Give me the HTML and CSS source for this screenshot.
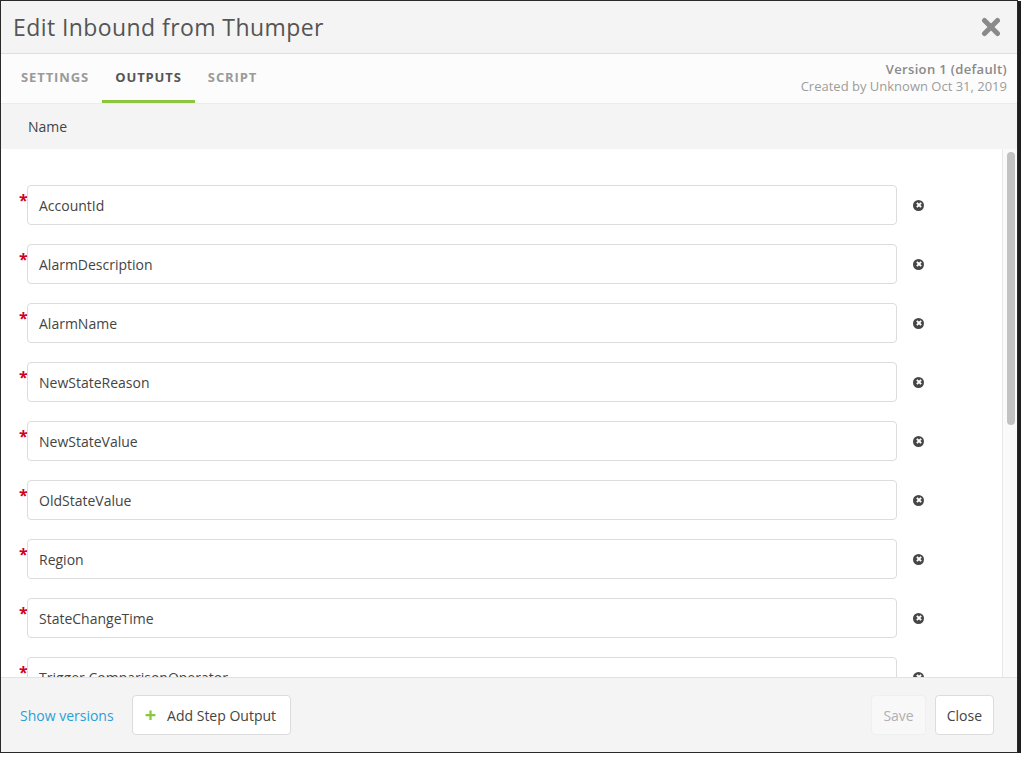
FILE: index.html
```html
<!DOCTYPE html>
<html>
<head>
<meta charset="utf-8">
<link rel="stylesheet" href="styles.css">
</head>
<body>
<div class="modal">
  <div class="modal-header">
    <h1 class="title">Edit Inbound from Thumper</h1>
    <span class="close-x" aria-label="close">
      <svg width="20" height="20" viewBox="0 0 20 20"><path d="M3.5 3.5 L16.5 16.5 M16.5 3.5 L3.5 16.5" stroke="#8a8a8a" stroke-width="5" stroke-linecap="round"/></svg>
    </span>
  </div>
  <div class="tabbar">
    <div class="tabs">
      <span class="tab">SETTINGS</span>
      <span class="tab active">OUTPUTS</span>
      <span class="tab">SCRIPT</span>
    </div>
    <div class="version">
      <div class="version-name">Version 1 (default)</div>
      <div class="version-meta">Created by Unknown Oct 31, 2019</div>
    </div>
  </div>
  <div class="col-header">Name</div>
  <div class="content">
    <div class="list">
      <div class="row"><span class="req">*</span><div class="field">AccountId</div><span class="remove"></span></div>
      <div class="row"><span class="req">*</span><div class="field">AlarmDescription</div><span class="remove"></span></div>
      <div class="row"><span class="req">*</span><div class="field">AlarmName</div><span class="remove"></span></div>
      <div class="row"><span class="req">*</span><div class="field">NewStateReason</div><span class="remove"></span></div>
      <div class="row"><span class="req">*</span><div class="field">NewStateValue</div><span class="remove"></span></div>
      <div class="row"><span class="req">*</span><div class="field">OldStateValue</div><span class="remove"></span></div>
      <div class="row"><span class="req">*</span><div class="field">Region</div><span class="remove"></span></div>
      <div class="row"><span class="req">*</span><div class="field">StateChangeTime</div><span class="remove"></span></div>
      <div class="row"><span class="req">*</span><div class="field">Trigger.ComparisonOperator</div><span class="remove"></span></div>
    </div>
    <div class="scrollbar"><div class="thumb"></div></div>
  </div>
  <div class="footer">
    <a class="link">Show versions</a>
    <button class="btn add"><span class="plus">+</span>Add Step Output</button>
    <div class="spacer"></div>
    <button class="btn disabled">Save</button>
    <button class="btn">Close</button>
  </div>
</div>
</body>
</html>
```
FILE: styles.css
```css
html, body {
  margin: 0;
  padding: 0;
  background: #ffffff;
  font-family: "Open Sans", "Liberation Sans", sans-serif;
}
.modal {
  width: 1016px;
  height: 751px;
  border: 1px solid #2a2a2a;
  box-shadow: 2px 2px 0 1px #1e1e1e;
  background: #f4f4f4;
  display: flex;
  flex-direction: column;
  overflow: hidden;
}
.modal-header {
  height: 52px;
  border-bottom: 1px solid #dedede;
  display: flex;
  align-items: center;
  padding: 0 16px 0 12px;
  background: #f4f4f4;
}
.title {
  margin: 0;
  flex: 1;
  font-size: 23px;
  font-weight: 400;
  color: #555555;
  letter-spacing: 0.42px;
}
.close-x {
  display: flex;
  width: 20px;
  height: 20px;
}
.tabbar {
  height: 49px;
  background: #fcfcfc;
  display: flex;
  justify-content: space-between;
  border-bottom: 1px solid #ececec;
}
.tabs {
  display: flex;
  padding-left: 7px;
}
.tab {
  padding: 0 13px;
  display: flex;
  align-items: center;
  font-size: 13px;
  font-weight: 700;
  color: #9a9a9a;
  letter-spacing: 0.9px;
  border-bottom: 3px solid transparent;
  padding-bottom: 1px;
}
.tab.active {
  color: #555555;
  border-bottom-color: #8cc63f;
}
.version {
  padding: 7px 10px 0 0;
  text-align: right;
  font-size: 13px;
  line-height: 17px;
}
.version-name {
  font-weight: 600;
  color: #8a8a8a;
  letter-spacing: 0.35px;
}
.version-meta {
  color: #9d9d9d;
}
.col-header {
  height: 45px;
  display: flex;
  align-items: center;
  padding-left: 27px;
  font-size: 14px;
  color: #444444;
  background: #f4f4f4;
}
.content {
  flex: 1;
  min-height: 0;
  background: #ffffff;
  display: flex;
}
.list {
  flex: 1;
  overflow: hidden;
  padding-top: 36px;
  display: flex;
  flex-direction: column;
  gap: 19px;
}
.scrollbar {
  box-sizing: border-box;
  width: 15px;
  flex-shrink: 0;
  border-left: 1px solid #e8e8e8;
  background: #fafafa;
  padding: 3px 2px 0 4px;
}
.thumb {
  height: 273px;
  background: #c2c2c2;
  border-radius: 4px;
}
.row {
  display: flex;
  align-items: center;
  padding-left: 18px;
  flex-shrink: 0;
}
.req {
  width: 8px;
  align-self: flex-start;
  color: #d0021b;
  font-size: 16px;
  font-weight: 700;
  line-height: 16px;
  margin-top: 7px;
}
.field {
  width: 857px;
  height: 38px;
  border: 1px solid #dcdcdc;
  border-radius: 4px;
  padding: 0 0 0 11px;
  display: flex;
  align-items: center;
  font-size: 14px;
  color: #444444;
  background: #ffffff;
  flex-shrink: 0;
}
.remove {
  width: 11px;
  height: 11px;
  margin-left: 16px;
  border-radius: 50%;
  background: #464646;
  position: relative;
  flex-shrink: 0;
}
.remove::before, .remove::after {
  content: "";
  position: absolute;
  left: 2.5px;
  top: 4.5px;
  width: 6px;
  height: 2px;
  background: #ffffff;
  transform: rotate(45deg);
}
.remove::after {
  transform: rotate(-45deg);
}
.footer {
  height: 74px;
  border-top: 1px solid #e2e2e2;
  background: #f4f4f4;
  display: flex;
  align-items: center;
  padding: 0 23px 0 19px;
  flex-shrink: 0;
}
.link {
  color: #2a9fd6;
  font-size: 14px;
  margin-right: 18px;
}
.btn {
  height: 40px;
  border: 1px solid #dcdcdc;
  border-radius: 4px;
  background: #ffffff;
  color: #444444;
  font-family: "Open Sans", "Liberation Sans", sans-serif;
  font-size: 14px;
  padding: 0 11px;
  display: flex;
  align-items: center;
}
.btn.add {
  padding: 0 14px 0 12px;
}
.plus {
  color: #8cc63f;
  font-size: 20px;
  font-weight: 700;
  margin-right: 11px;
  line-height: 20px;
}
.spacer {
  flex: 1;
}
.btn.disabled {
  background: #f8f8f8;
  border-color: #efefef;
  color: #b0b0b0;
  margin-right: 9px;
}
```
